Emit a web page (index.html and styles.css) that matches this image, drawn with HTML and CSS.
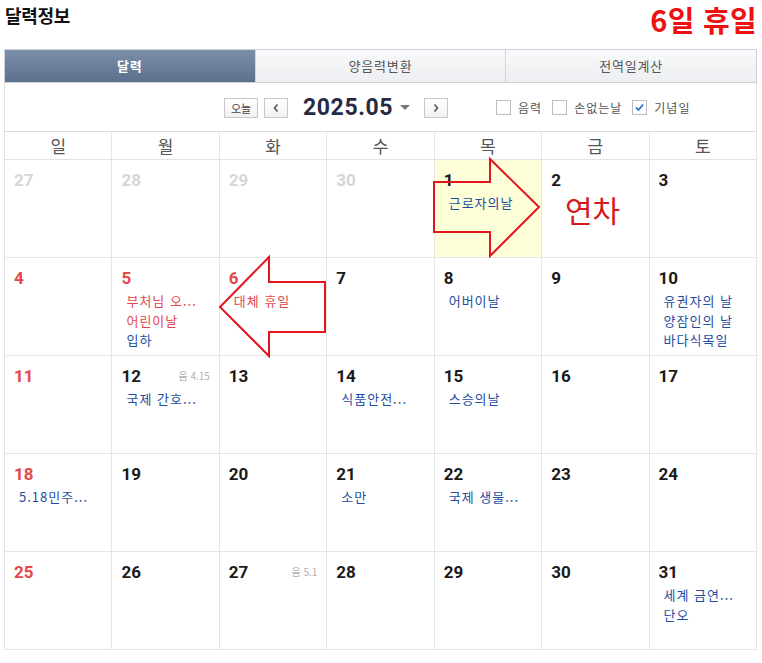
FILE: index.html
```html
<!DOCTYPE html>
<html lang="ko">
<head>
<meta charset="utf-8">
<title>달력정보</title>
<link rel="stylesheet" href="styles.css">
</head>
<body>
<div class="page">
  <header class="top">
    <h1 class="title">달력정보</h1>
    <div class="holiday">6일 휴일</div>
  </header>

  <div class="cal">
    <div class="tabs">
      <div class="tab active">달력</div>
      <div class="tab">양음력변환</div>
      <div class="tab">전역일계산</div>
    </div>

    <div class="nav">
      <span class="btn today">오늘</span>
      <span class="btn arrow prev"><svg width="8" height="10" viewBox="0 0 8 10"><path d="M5.5 1.5 L2.5 5 L5.5 8.5" fill="none" stroke="#555" stroke-width="1.6"/></svg></span>
      <span class="month">2025.05</span>
      <span class="caret"></span>
      <span class="btn arrow next"><svg width="8" height="10" viewBox="0 0 8 10"><path d="M2.5 1.5 L5.5 5 L2.5 8.5" fill="none" stroke="#555" stroke-width="1.6"/></svg></span>
      <label class="chk first"><span class="box"></span>음력</label>
      <label class="chk"><span class="box"></span>손없는날</label>
      <label class="chk"><span class="box on"><svg width="11" height="11" viewBox="0 0 11 11"><path d="M2 5.5 L4.5 8 L9 2.5" fill="none" stroke="#2f6fd0" stroke-width="1.8"/></svg></span>기념일</label>
    </div>

    <div class="weekdays">
      <div>일</div><div>월</div><div>화</div><div>수</div><div>목</div><div>금</div><div>토</div>
    </div>

    <div class="grid">
      <div class="cell"><div class="dh"><span class="num other">27</span></div></div>
      <div class="cell"><div class="dh"><span class="num other">28</span></div></div>
      <div class="cell"><div class="dh"><span class="num other">29</span></div></div>
      <div class="cell"><div class="dh"><span class="num other">30</span></div></div>
      <div class="cell today-cell"><div class="dh"><span class="num">1</span></div><ul class="ev"><li>근로자의날</li></ul></div>
      <div class="cell"><div class="dh"><span class="num">2</span></div></div>
      <div class="cell"><div class="dh"><span class="num">3</span></div></div>

      <div class="cell"><div class="dh"><span class="num sun">4</span></div></div>
      <div class="cell"><div class="dh"><span class="num sun">5</span></div><ul class="ev"><li class="red">부처님 오...</li><li class="red">어린이날</li><li>입하</li></ul></div>
      <div class="cell"><div class="dh"><span class="num sun">6</span></div><ul class="ev"><li class="red">대체 휴일</li></ul></div>
      <div class="cell"><div class="dh"><span class="num">7</span></div></div>
      <div class="cell"><div class="dh"><span class="num">8</span></div><ul class="ev"><li>어버이날</li></ul></div>
      <div class="cell"><div class="dh"><span class="num">9</span></div></div>
      <div class="cell"><div class="dh"><span class="num">10</span></div><ul class="ev"><li>유권자의 날</li><li>양잠인의 날</li><li>바다식목일</li></ul></div>

      <div class="cell"><div class="dh"><span class="num sun">11</span></div></div>
      <div class="cell"><div class="dh"><span class="num">12</span><span class="lunar">음 4.15</span></div><ul class="ev"><li>국제 간호...</li></ul></div>
      <div class="cell"><div class="dh"><span class="num">13</span></div></div>
      <div class="cell"><div class="dh"><span class="num">14</span></div><ul class="ev"><li>식품안전...</li></ul></div>
      <div class="cell"><div class="dh"><span class="num">15</span></div><ul class="ev"><li>스승의날</li></ul></div>
      <div class="cell"><div class="dh"><span class="num">16</span></div></div>
      <div class="cell"><div class="dh"><span class="num">17</span></div></div>

      <div class="cell"><div class="dh"><span class="num sun">18</span></div><ul class="ev"><li>5.18민주...</li></ul></div>
      <div class="cell"><div class="dh"><span class="num">19</span></div></div>
      <div class="cell"><div class="dh"><span class="num">20</span></div></div>
      <div class="cell"><div class="dh"><span class="num">21</span></div><ul class="ev"><li>소만</li></ul></div>
      <div class="cell"><div class="dh"><span class="num">22</span></div><ul class="ev"><li>국제 생물...</li></ul></div>
      <div class="cell"><div class="dh"><span class="num">23</span></div></div>
      <div class="cell"><div class="dh"><span class="num">24</span></div></div>

      <div class="cell"><div class="dh"><span class="num sun">25</span></div></div>
      <div class="cell"><div class="dh"><span class="num">26</span></div></div>
      <div class="cell"><div class="dh"><span class="num">27</span><span class="lunar">음 5.1</span></div></div>
      <div class="cell"><div class="dh"><span class="num">28</span></div></div>
      <div class="cell"><div class="dh"><span class="num">29</span></div></div>
      <div class="cell"><div class="dh"><span class="num">30</span></div></div>
      <div class="cell"><div class="dh"><span class="num">31</span></div><ul class="ev"><li>세계 금연...</li><li>단오</li></ul></div>
    </div>
  </div>

  <svg class="overlay" width="762" height="663" viewBox="0 0 762 663">
    <polygon points="434,182 490,182 490,159 539,207 490,256 490,232 434,232" fill="none" stroke="#e3161d" stroke-width="2" stroke-linejoin="miter"/>
    <polygon points="220,307 269,257 269,282 325,282 325,332 269,332 269,356" fill="none" stroke="#e3161d" stroke-width="2" stroke-linejoin="miter"/>
  </svg>
  <div class="note">연차</div>
</div>
</body>
</html>
```

FILE: styles.css
```css
* { box-sizing: border-box; }
html, body { margin: 0; padding: 0; background: #fff; }
body {
  font-family: "Noto Sans CJK KR", "Noto Sans", sans-serif;
  color: #222;
}
.page {
  position: relative;
  width: 762px;
  height: 663px;
}
.top {
  height: 49px;
  display: flex;
  justify-content: space-between;
  align-items: flex-start;
  padding: 0 5px 0 4px;
}
.title {
  margin: 2px 0 0 1px;
  font-size: 18px;
  line-height: 26px;
  font-weight: 700;
  color: #111;
  letter-spacing: -0.3px;
}
.holiday {
  margin-top: 0;
  font-size: 29px;
  line-height: 38px;
  font-weight: 700;
  color: #ee1111;
  letter-spacing: 0.3px;
}
.cal {
  margin: 0 5px 0 4px;
}
.tabs {
  display: flex;
  height: 34px;
  border: 1px solid #cdd1d7;
  background: linear-gradient(#f8f9fa, #eceef1);
}
.tab {
  flex: 1;
  text-align: center;
  line-height: 32px;
  font-size: 13px;
  color: #555;
  letter-spacing: 0.8px;
  border-left: 1px solid #d2d5da;
}
.tab:first-child { border-left: 0; }
.tab.active {
  background: linear-gradient(#7b8fa9, #5c6f8c);
  color: #fff;
  font-weight: 700;
}
.nav {
  height: 49px;
  display: flex;
  align-items: center;
  border-left: 1px solid #e2e2e2;
  border-right: 1px solid #e2e2e2;
  border-bottom: 1px solid #dcdcdc;
  padding-left: 219px;
  padding-top: 1px;
}
.btn {
  height: 20px;
  border: 1px solid #c8c8c8;
  background: linear-gradient(#fff, #f1f1f1);
  display: flex;
  align-items: center;
  justify-content: center;
  font-size: 11px;
  color: #444;
}
.today { width: 34px; }
.arrow { width: 24px; }
.prev { margin-left: 6px; }
.month {
  margin-left: 15px;
  font-family: Roboto, "Noto Sans", sans-serif;
  font-size: 23px;
  font-weight: 700;
  color: #262b42;
  letter-spacing: 0.6px;
}
.caret {
  margin-left: 7px;
  width: 0;
  height: 0;
  border-left: 5px solid transparent;
  border-right: 5px solid transparent;
  border-top: 5px solid #777;
}
.next { margin-left: 14px; }
.chk {
  display: flex;
  align-items: center;
  font-size: 12px;
  color: #555;
  letter-spacing: 1px;
  margin-left: 10px;
}
.chk.first { margin-left: 48px; }
.box {
  width: 15px;
  height: 15px;
  border: 1px solid #bdbdbd;
  background: #fff;
  margin-right: 7px;
  display: flex;
  align-items: center;
  justify-content: center;
}
.weekdays {
  display: grid;
  grid-template-columns: repeat(7, 1fr);
  height: 28px;
  border-left: 1px solid #e2e2e2;
  border-bottom: 1px solid #e2e2e2;
}
.weekdays div {
  border-right: 1px solid #e6e6e6;
  text-align: center;
  font-size: 17px;
  line-height: 27px;
  color: #555;
}
.grid {
  display: grid;
  grid-template-columns: repeat(7, 1fr);
  grid-auto-rows: 98px;
  border-left: 1px solid #e2e2e2;
}
.cell {
  border-right: 1px solid #e6e6e6;
  border-bottom: 1px solid #e6e6e6;
  padding: 10px 9px 0 9px;
}
.today-cell { background: #fefed9; }
.dh {
  display: flex;
  justify-content: space-between;
  align-items: center;
  height: 20px;
}
.num {
  font-family: Roboto, "Noto Sans", sans-serif;
  font-weight: 700;
  font-size: 17px;
  line-height: 20px;
  color: #1a1a1a;
}
.num.other { color: #d6d6d6; }
.num.sun { color: #e6474b; }
.lunar {
  font-size: 10px;
  color: #b0b0b0;
  margin-top: -2px;
}
.ev {
  list-style: none;
  margin: 3px 0 0;
  padding: 0 0 0 5px;
}
.ev li {
  font-size: 13px;
  line-height: 19.5px;
  letter-spacing: 1px;
  color: #1f4ea1;
  white-space: nowrap;
}
.ev li.red { color: #e2474c; }
.overlay {
  position: absolute;
  top: 0;
  left: 0;
  pointer-events: none;
}
.note {
  position: absolute;
  left: 565px;
  top: 188px;
  font-size: 30px;
  line-height: 42px;
  color: #d41a1a;
}
```
